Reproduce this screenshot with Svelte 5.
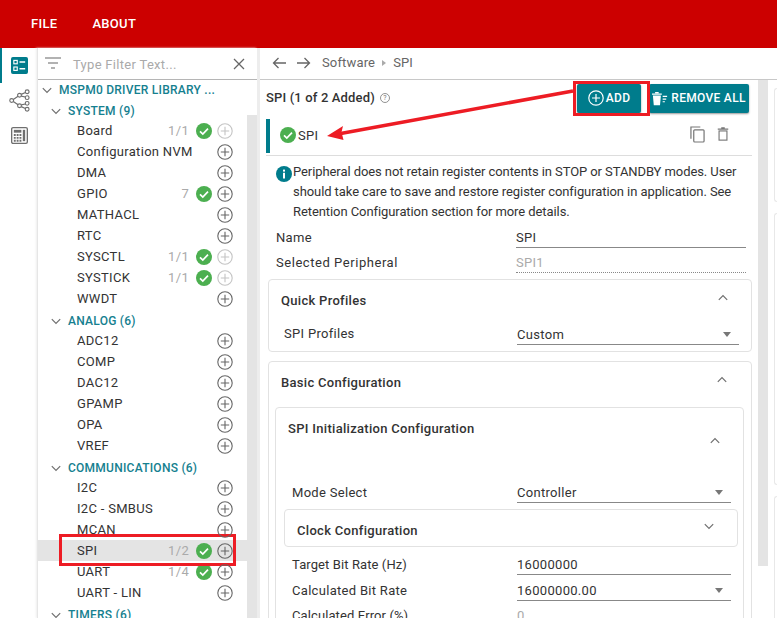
<script>
  const groups = [
    { name: 'SYSTEM (9)', items: [
      { n: 'Board', c: '1/1', ok: true, dim: true }, { n: 'Configuration NVM' }, { n: 'DMA' },
      { n: 'GPIO', c: '7', ok: true }, { n: 'MATHACL' }, { n: 'RTC' },
      { n: 'SYSCTL', c: '1/1', ok: true, dim: true }, { n: 'SYSTICK', c: '1/1', ok: true, dim: true }, { n: 'WWDT' } ] },
    { name: 'ANALOG (6)', items: ['ADC12', 'COMP', 'DAC12', 'GPAMP', 'OPA', 'VREF'].map((n) => ({ n })) },
    { name: 'COMMUNICATIONS (6)', items: [
      { n: 'I2C' }, { n: 'I2C - SMBUS' }, { n: 'MCAN' },
      { n: 'SPI', c: '1/2', ok: true, sel: true }, { n: 'UART', c: '1/4', ok: true }, { n: 'UART - LIN' } ] },
    { name: 'TIMERS (6)', items: [] }
  ];
</script>

{#snippet chev(up)}
  <svg class="chev" viewBox="0 0 10 7" width="10" height="7"><path d={up ? 'M.8 5.800 5 1.600l4.200 4.200' : 'M.8 1.200 5 5.400l4.200-4.200'} /></svg>
{/snippet}
{#snippet okIcon(size)}
  <svg viewBox="0 0 16 16" width={size} height={size} class="ok"><circle cx="8" cy="8" r="8" fill="#4caf50" /><path d="M4 8.300l2.800 2.700L12 5.600" fill="none" stroke="#fff" stroke-width="1.700" /></svg>
{/snippet}
{#snippet plus(dim)}
  <svg viewBox="0 0 16 16" width="16" height="16" class="plus" class:dim><circle cx="8" cy="8" r="7.200" /><path d="M8 3.800v8.400M3.800 8h8.400" /></svg>
{/snippet}
{#snippet caret()}
  <span class="caret"></span>
{/snippet}

<div class="app">
  <header>
    <span>FILE</span><span>ABOUT</span>
  </header>
  <div class="body">
    <nav class="rail">
      <div class="rail-item active">
        <svg viewBox="0 0 18 18" width="17" height="17"><rect width="18" height="18" rx="2" fill="#007c8c" /><g fill="none" stroke="#fff" stroke-width="1.200"><rect x="3" y="3.600" width="3.600" height="3.600" /><rect x="3" y="10.600" width="3.600" height="3.600" /></g><path d="M9 5.400h6M9 12.400h6" stroke="#fff" stroke-width="1.600" /></svg>
      </div>
      <div class="rail-item">
        <svg viewBox="0 0 22 24" width="21" height="23" fill="none" stroke="#6f6f6f" stroke-width="1.200"><circle cx="2.800" cy="12" r="2" /><circle cx="11" cy="6.500" r="2" /><circle cx="11" cy="17.500" r="2" /><circle cx="19" cy="2.800" r="2" /><circle cx="19" cy="9" r="2" /><circle cx="19" cy="15" r="2" /><circle cx="19" cy="21.200" r="2" /><path d="M4.500 11l5-3.500M4.500 13l5 3.500M12.800 5.600l4.400-2M12.800 7.400l4.400 1M12.800 16.600l4.400-1M12.800 18.400l4.400 2" /></svg>
      </div>
      <div class="rail-item">
        <svg viewBox="0 0 18 18" width="17" height="17"><rect x=".7" y=".7" width="16.600" height="16.600" rx="1.500" fill="none" stroke="#6f6f6f" stroke-width="1.400" /><rect x="3" y="3" width="8" height="3" fill="#6f6f6f" /><rect x="12.500" y="3" width="2.500" height="12" fill="#6f6f6f" /><path d="M3 8.500h2M6 8.500h2M9 8.500h2M3 11.500h2M6 11.500h2M9 11.500h2M3 14.500h2M6 14.500h2M9 14.500h2" stroke="#6f6f6f" stroke-width="2" /></svg>
      </div>
    </nav>

    <aside class="tree">
      <div class="filter">
        <svg viewBox="0 0 16 12" width="16" height="12"><path d="M0 1h16M3 6h10M6 11h4" stroke="#666" stroke-width="1.200" /></svg>
        <span class="ph">Type Filter Text...</span>
        <svg class="x" viewBox="0 0 12 12" width="12" height="12"><path d="M1 1l10 10M11 1 1 11" stroke="#666" stroke-width="1.300" /></svg>
      </div>
      <div class="tree-scroll">
        <div class="root">{@render chev(false)}<span class="hd">MSPM0 DRIVER LIBRARY ...</span></div>
        {#each groups as g}
          <div class="group">{@render chev(false)}<span class="hd">{g.name}</span></div>
          {#each g.items as it}
            <div class="row" class:sel={it.sel}>
              <span class="name">{it.n}</span>
              {#if it.c}<span class="count">{it.c}</span>{/if}
              {#if it.ok}<span class="ok-wrap">{@render okIcon(16)}</span>{/if}
              {@render plus(it.dim)}
            </div>
          {/each}
        {/each}
        <div class="tree-bar"></div>
      </div>
    </aside>

    <main>
      <div class="crumbs">
        <svg viewBox="0 0 14 12" width="14" height="12"><path d="M14 6H1.500M6.500 1l-5 5 5 5" fill="none" stroke="#666" stroke-width="1.300" /></svg>
        <svg viewBox="0 0 14 12" width="14" height="12"><path d="M0 6h12.500M7.500 1l5 5-5 5" fill="none" stroke="#666" stroke-width="1.300" /></svg>
        <span class="crumb">Software</span><span class="tri"></span><span class="crumb">SPI</span>
      </div>
      <div class="scroll">
        <div class="panel">
          <div class="title-row">
            <strong>SPI (1 of 2 Added)</strong>
            <svg class="help" viewBox="0 0 10 10" width="10" height="10"><circle cx="5" cy="5" r="4.500" fill="none" stroke="#777" stroke-width=".8" /><text x="5" y="7.400" text-anchor="middle" font-size="7" fill="#777">?</text></svg>
            <div class="btns">
              <button class="add">
                <svg viewBox="0 0 16 16" width="16" height="16"><circle cx="8" cy="8" r="7.200" fill="none" stroke="#fff" stroke-width="1.200" /><path d="M8 4v8M4 8h8" stroke="#fff" stroke-width="1.200" /></svg>ADD
              </button>
              <button class="remove">
                <svg viewBox="0 0 18 16" width="16" height="15" fill="#fff"><path d="M0 2.500h11v1.200H0zM3.500 .8h4v1.200h-4zM1 4.500h9L9 15.500H2zM12 5h5v1.300h-5zM12 8h4v1.300h-4zM12 11h2.500v1.300H12z" /></svg>REMOVE ALL
              </button>
            </div>
          </div>

          <div class="inst">
            <div class="inst-left">{@render okIcon(16)}<span>SPI</span></div>
            <div class="inst-actions">
              <svg viewBox="0 0 16 18" width="15" height="17" fill="none" stroke="#777" stroke-width="1.300"><path d="M1 13.500V1h10" /><rect x="4" y="4" width="11" height="13" rx="1" /></svg>
              <svg viewBox="0 0 12 16" width="12" height="14" fill="none" stroke="#777" stroke-width="1.300"><path d="M0 2.500h12M4 1h4" /><rect x="1.500" y="4.500" width="9" height="10.500" /></svg>
            </div>
          </div>

          <div class="info">
            <svg viewBox="0 0 16 16" width="16" height="16"><circle cx="8" cy="8" r="8" fill="#007c8c" /><rect x="7" y="6.800" width="2" height="5.700" fill="#fff" /><rect x="7" y="3.600" width="2" height="2" fill="#fff" /></svg>
            <p>Peripheral does not retain register contents in STOP or STANDBY modes. User should take care to save and restore register configuration in application. See Retention Configuration section for more details.</p>
          </div>

          <div class="field top"><label>Name</label><div class="val">SPI</div></div>
          <div class="field ro"><label class="wide">Selected Peripheral</label><div class="val">SPI1</div></div>

          <section class="card quick">
            <div class="card-head"><b>Quick Profiles</b>{@render chev(true)}</div>
            <div class="field in"><label>SPI Profiles</label><div class="val">Custom{@render caret()}</div></div>
          </section>

          <section class="card basic">
            <div class="card-head"><b>Basic Configuration</b>{@render chev(true)}</div>
            <section class="card init">
              <div class="card-head"><b>SPI Initialization Configuration</b>{@render chev(true)}</div>
              <div class="field in2 mode"><label>Mode Select</label><div class="val">Controller{@render caret()}</div></div>
              <section class="card clock">
                <div class="card-head"><b>Clock Configuration</b>{@render chev(false)}</div>
              </section>
              <div class="field in2 target"><label class="tight">Target Bit Rate (Hz)</label><div class="val">16000000</div></div>
              <div class="field in2 calc"><label>Calculated Bit Rate</label><div class="val">16000000.00{@render caret()}</div></div>
              <div class="field in2 err"><label class="tight">Calculated Error (%)</label><div class="val">0</div></div>
            </section>
          </section>
        </div>
        <div class="main-bar"></div>
        <div class="edge"><i></i><i></i><i></i></div>
      </div>
    </main>
  </div>

  <div class="mark mark-add"></div>
  <div class="mark mark-spi"></div>
  <svg class="arrow" viewBox="0 0 777 618" width="777" height="618">
    <path d="M573 91 338 134" stroke="#ed1c24" stroke-width="3.500" fill="none" />
    <path d="M327 136l16-10-1.500 6 2 8z" fill="#ed1c24" />
  </svg>
</div>

<style>
  :global(body) { margin: 0; background: #fff; }
  .app { position: relative; width: 777px; height: 618px; overflow: hidden; font-family: Roboto, "Liberation Sans", sans-serif; font-size: 13px; letter-spacing: .3px; color: #333; }
  header { height: 48px; background: #cc0000; color: #fff; font-weight: 500; font-size: 13px; display: flex; align-items: center; gap: 35px; padding: 0 0 2px 31px; box-sizing: border-box; }
  .body { display: flex; height: 570px; }
  .rail { width: 37px; flex: none; }
  .rail-item { height: 35px; display: flex; align-items: center; justify-content: center; padding-left: 2px; box-sizing: border-box; }
  .rail-item.active { border-left: 2px solid #007c8c; padding-left: 0; }
  .tree { width: 220px; flex: none; border-left: 1px solid #e6e6e6; box-sizing: border-box; box-shadow: -1px 0 2px #eee; display: flex; flex-direction: column; }
  .filter { height: 32px; flex: none; display: flex; align-items: center; padding-left: 7px; border-bottom: 1px solid #b5b5b5; box-sizing: border-box; }
  .filter > svg:first-child { margin-top: -1px; }
  .ph { margin: 1px 0 0 12px; color: #aaa; flex: 1; }
  .x { margin-right: 12px; }
  .tree-scroll { position: relative; flex: 1; overflow: hidden; }
  .root, .group { display: flex; align-items: center; font-weight: 500; font-size: 12px; letter-spacing: .25px; color: #15808f; height: 20px; padding-top: 2px; box-sizing: border-box; }
  .root { padding-left: 4px; margin-top: -1px; }
  .group { padding-left: 13px; margin-top: 1px; }
  .hd { white-space: nowrap; margin-left: 7px; }
  .chev { fill: none; stroke: #6f6f6f; stroke-width: 1.200; flex: none; }
  .row { height: 21px; display: flex; align-items: center; padding-left: 39px; position: relative; }
  .row.sel { background: #e4e4e4; }
  .name { flex: 1; white-space: nowrap; }
  .count { color: #aaa; margin-right: 7px; }
  .ok-wrap { display: flex; margin-right: 5px; }
  .ok { flex: none; }
  .plus { flex: none; margin-right: 24px; fill: none; stroke: #666; stroke-width: 1.100; position: relative; z-index: 1; }
  .plus.dim { stroke: #c4c4c4; }
  .tree-bar { position: absolute; right: 0; top: 35px; bottom: 0; width: 10px; background: #e4e4e4; }
  main { flex: 1; min-width: 0; display: flex; flex-direction: column; border-left: 3px solid #ededed; }
  .crumbs { height: 32px; flex: none; display: flex; align-items: center; gap: 9px; padding: 0 0 2px 12px; border-bottom: 1px solid #c8c8c8; box-sizing: border-box; color: #666; letter-spacing: .15px; }
  .crumbs svg + svg { margin-left: 2px; }
  .crumb:first-of-type { margin-left: 2px; }
  .tri { border-left: 4px solid #aaa; border-top: 3px solid transparent; border-bottom: 3px solid transparent; margin: 0 -2px 0 -2px; }
  .scroll { flex: 1; display: flex; min-height: 0; overflow: hidden; }
  .panel { width: 492px; flex: none; padding: 0 0 0 6px; margin-right: 6px; box-sizing: border-box; }
  .title-row { height: 36px; display: flex; align-items: center; margin-bottom: 3px; padding-bottom: 2px; box-sizing: border-box; }
  .title-row strong { font-weight: 500; letter-spacing: .15px; }
  .help { margin: 2px 0 0 5px; }
  .btns { margin: 2px 3px 0 auto; display: flex; }
  button { border: 0; background: #007c8c; color: #fff; font: 500 12px Roboto, sans-serif; letter-spacing: .3px; height: 29px; display: flex; align-items: center; gap: 2px; padding: 0; border-radius: 2px; box-shadow: 0 1px 2px #999; }
  .add { width: 64px; justify-content: center; margin-right: 8px; }
  .remove { width: 100px; justify-content: center; gap: 3px; }
  .inst { height: 34px; border-left: 4px solid #007c8c; display: flex; align-items: center; justify-content: space-between; position: relative; }
  .inst::after { content: ""; position: absolute; left: -4px; right: 0; bottom: -3px; border-bottom: 1px solid #ddd; }
  .inst-left { display: flex; align-items: center; margin: 0 0 2px 10px; gap: 2px; }
  .inst-actions { display: flex; gap: 12px; margin: 0 23px 4px 0; align-items: center; }
  .info { display: flex; margin: 9px 0 0 10px; width: 466px; }
  .info svg { flex: none; margin-top: 4px; }
  .info p { margin: 0 0 0 1px; line-height: 20px; letter-spacing: -.08px; }
  .field { display: flex; align-items: flex-end; height: 25px; }
  .field label { width: 240px; flex: none; box-sizing: border-box; color: #333; line-height: 20px; }
  .field label.wide { letter-spacing: .55px; }
  .field label.tight { letter-spacing: .1px; }
  .field .val { flex: 1; position: relative; border-bottom: 1px solid #888; height: 20px; line-height: 19px; box-sizing: border-box; }
  .field.top { margin: 1px 0 0 10px; }
  .field.top .val, .field.ro .val { margin-right: 6px; }
  .field.ro .val { color: #aaa; border-bottom: 1px dotted #888; }
  .field.ro { margin-left: 10px; }
  .caret { position: absolute; right: 8px; top: 7px; border-top: 5px solid #777; border-left: 4.500px solid transparent; border-right: 4.500px solid transparent; }
  .card { border: 1px solid #e2e2e2; border-radius: 4px; box-sizing: border-box; }
  .card-head { display: flex; justify-content: space-between; }
  .card-head b { font-weight: 500; line-height: 15px; }
  .quick { height: 73px; width: 484px; margin: 6px 0 0 2px; padding: 13px 12px 0 12px; }
  .quick > .card-head .chev { margin: 1px 11px 0 0; }
  .field.in { margin: 12px 0 0 3px; }
  .field.in label { width: 233px; line-height: 22px; }
  .basic { height: 290px; width: 484px; margin: 9px 0 0 2px; padding: 13px 7px 0 6px; }
  .basic > .card-head { padding: 0 8px 0 6px; }
  .basic > .card-head .chev { margin: 1px 9px 0 0; }
  .init { margin-top: 17px; padding: 13px 12px 0 12px; height: 260px; }
  .init > .card-head .chev { margin: 16px 11px 0 0; }
  .field.in2 { margin-left: 4px; }
  .field.in2 label { width: 225px; }
  .field.mode { margin-top: 34px; }
  .clock { height: 38px; width: 454px; margin: 6px 0 0 -4px; padding: 13px 23px 0 12px; }
  .field.target { margin-top: 3px; }
  .field.calc { margin-top: 1px; }
  .field.err .val { color: #aaa; border: 0; }
  .main-bar { width: 10px; height: 486px; background: #e4e4e4; flex: none; }
  .edge { flex: 1; margin-left: 6px; }
  .edge i { display: block; border: 1px solid #e8e8e8; border-right: 0; border-radius: 4px 0 0 4px; box-sizing: border-box; }
  .edge i:nth-child(1) { height: 114px; margin-top: 8px; }
  .edge i:nth-child(2) { height: 272px; margin-top: 11px; }
  .edge i:nth-child(3) { height: 200px; margin-top: 11px; }
  .mark { position: absolute; border: 3px solid #ed1c24; box-sizing: border-box; }
  .mark-add { left: 573px; top: 81px; width: 77px; height: 35px; }
  .mark-spi { left: 59px; top: 534px; width: 177px; height: 32px; }
  .arrow { position: absolute; left: 0; top: 0; pointer-events: none; }
</style>
